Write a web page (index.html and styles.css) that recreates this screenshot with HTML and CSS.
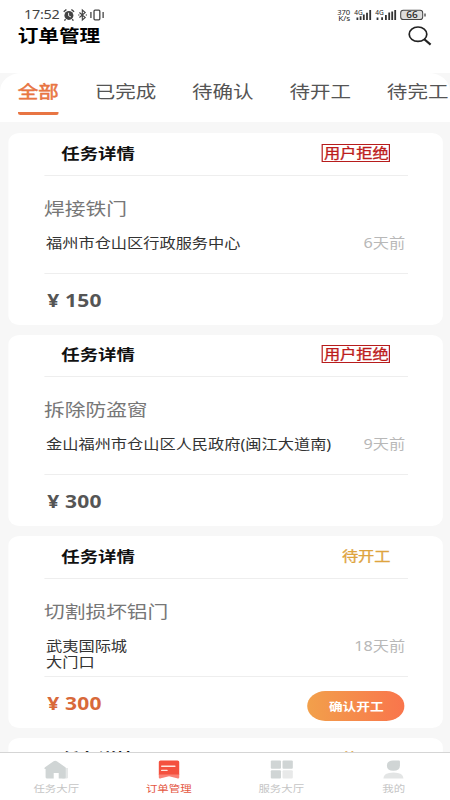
FILE: index.html
```html
<!DOCTYPE html>
<html lang="zh-CN">
<head>
<meta charset="utf-8">
<title>订单管理</title>
<link rel="stylesheet" href="styles.css">
</head>
<body>
<div class="screen">
  <header class="header">
    <div class="status">
      <span class="clock">17:52</span>
      <svg class="status-left" viewBox="0 0 44 14" preserveAspectRatio="none" fill="none" stroke="#444">
        <circle cx="6.5" cy="7.4" r="4.5" fill="#444" stroke="none"/>
        <path d="M1.300 3.800 4 1.500M9 1.500l2.700 2.300M3.200 11.200 2 12.600M9.800 11.200l1.200 1.400" stroke-width="1.400"/>
        <path d="M6.200 4.800v3l2.300 1.100" stroke="#fff" stroke-width=".9"/>
        <path d="m17 4.500 5.800 5-2.900 2.500V2l2.900 2.500-5.800 5" stroke-width="1.100"/>
        <path d="M16 7h.9M23.400 7h.9" stroke-width="1.300"/>
        <rect x="31.600" y="2.200" width="5.800" height="9.600" rx="1" stroke-width="1.300"/>
        <path d="M28.500 4v6M40.700 4v6" stroke-width="1.300"/>
      </svg>
      <svg class="status-right" viewBox="0 0 90 14" preserveAspectRatio="none">
        <g class="tiny">
          <text x="0" y="6.500" textLength="13" lengthAdjust="spacingAndGlyphs">370</text>
          <text x="1" y="13" textLength="12" lengthAdjust="spacingAndGlyphs">K/s</text>
          <text x="17" y="6.500" textLength="8.500" lengthAdjust="spacingAndGlyphs">4G</text>
          <text x="38" y="6.500" textLength="8.500" lengthAdjust="spacingAndGlyphs">4G</text>
        </g>
        <path d="M20.200 12V9.500M23.400 12V8.200M26.600 12V6.600M29.800 12V4.800M33 12V2M40.300 12V9.500M44.900 12V9.200M48.700 12V7M52 12V4.600M58 12V2M55 12V3.500" stroke="#333" stroke-width="1.800"/>
        <rect x="63.500" y="2.300" width="22" height="9.300" rx="2.600" fill="#ddd" stroke="#444" stroke-width="1"/>
        <path d="M87.800 5.400v3.200" stroke="#333" stroke-width="1.200"/>
        <text class="level" x="69" y="10" textLength="11.500" lengthAdjust="spacingAndGlyphs">66</text>
      </svg>
    </div>
    <div class="heading">
      <h1>订单管理</h1>
      <svg class="search" viewBox="0 0 24 20" preserveAspectRatio="none" fill="none" stroke="#222">
        <ellipse cx="10" cy="8.200" rx="8.800" ry="7.200" stroke-width="1.700"/>
        <path d="m16 13 6.600 5.600" stroke-width="2.200"/>
      </svg>
    </div>
  </header>

  <nav class="tabs">
    <span class="tab current">全部</span>
    <span class="tab">已完成</span>
    <span class="tab">待确认</span>
    <span class="tab">待开工</span>
    <span class="tab">待完工</span>
  </nav>

  <main class="orders">
    <article class="card">
      <div class="card-head"><b>任务详情</b><span class="state refused">用户拒绝</span></div>
      <div class="card-body">
        <h2>焊接铁门</h2>
        <div class="place"><span>福州市仓山区行政服务中心</span><time>6天前</time></div>
      </div>
      <div class="card-foot"><strong>¥ 150</strong></div>
    </article>
    <article class="card">
      <div class="card-head"><b>任务详情</b><span class="state refused">用户拒绝</span></div>
      <div class="card-body">
        <h2>拆除防盗窗</h2>
        <div class="place"><span>金山福州市仓山区人民政府(闽江大道南)</span><time>9天前</time></div>
      </div>
      <div class="card-foot"><strong>¥ 300</strong></div>
    </article>
    <article class="card">
      <div class="card-head"><b>任务详情</b><span class="state waiting">待开工</span></div>
      <div class="card-body">
        <h2>切割损坏铝门</h2>
        <div class="place"><span>武夷国际城<br>大门口</span><time>18天前</time></div>
      </div>
      <div class="card-foot"><strong class="active">¥ 300</strong><button>确认开工</button></div>
    </article>
    <article class="card">
      <div class="card-head"><b>任务详情</b><span class="state waiting">待开工</span></div>
    </article>
  </main>

  <footer class="bottom">
    <div class="item">
      <svg viewBox="0 0 26 20" preserveAspectRatio="none">
        <path d="M19 8h5.800v9.200q0 1.300-1.500 1.300H19z" fill="#e6e8e8"/>
        <path d="M1.500 7.500 10.400 1.200q1.600-1.100 3.200 0L22.500 7.500v9.700q0 1.300-1.500 1.300h-5.500V13h-5v5.500H3.900q-1.500 0-1.500-1.300V9H1.200z" fill="#d0d5d5"/>
      </svg>
      <span>任务大厅</span>
    </div>
    <div class="item selected">
      <svg viewBox="0 0 26 20" preserveAspectRatio="none">
        <path d="M4.500.5h17q1.700 0 1.700 1.500v13H2.800V2q0-1.500 1.700-1.500z" fill="#f4513f"/>
        <path d="M2.800 14.500h20.400v3q0 1.500-2.200.8L13 16.200l-8 2.100q-2.200.7-2.200-.8z" fill="#fa8175"/>
        <path d="M5.700 6.200h13.200M5.700 10.400h5.300" stroke="#ffe7df" stroke-width="1.400" stroke-linecap="round"/>
      </svg>
      <span>订单管理</span>
    </div>
    <div class="item">
      <svg viewBox="0 0 26 20" preserveAspectRatio="none" fill="#d0d5d5">
        <rect x="2" y=".5" width="10.200" height="8.200" rx="1"/>
        <rect x="13.700" y=".5" width="10.300" height="8.200" rx="1"/>
        <rect x="2" y="10.200" width="10.200" height="8.300" rx="1"/>
        <rect x="13.700" y="10.200" width="10.300" height="8.300" rx="1" fill="#e8e9e9"/>
      </svg>
      <span>服务大厅</span>
    </div>
    <div class="item">
      <svg viewBox="0 0 26 20" preserveAspectRatio="none">
        <path d="M3 18.500q0-6 10-6t10 6z" fill="#e3e5e5"/>
        <path d="M12.600.5h6q.9 0 .9.900v4.400q0 5-6.500 5t-6.500-5q0-5.300 6.100-5.300z" fill="#d0d5d5"/>
      </svg>
      <span>我的</span>
    </div>
  </footer>
</div>
</body>
</html>
```
FILE: styles.css
```css
* { box-sizing: border-box; }

body {
  margin: 0;
  overflow: hidden;
  background: #fff;
  font-family: "Noto Sans", "Noto Sans CJK SC", sans-serif;
}

/* A 375px wide layout stretched across the 450px window */
.screen {
  display: flex;
  flex-direction: column;
  width: 375px;
  height: 800px;
  overflow: hidden;
  background: #f7f7f7;
  transform: scaleX(1.2);
  transform-origin: 0 0;
}

h1, h2 { margin: 0; }

.header { flex: none; height: 73px; background: #fff; }

.status {
  display: flex;
  align-items: center;
  height: 22px;
  padding: 8px 19.500px 0 20px;
}
.clock {
  width: 32px;
  color: #444;
  font-size: 12px;
  line-height: 14px;
  letter-spacing: -0.200px;
}
.status-left { width: 36.700px; height: 14px; }
.status-right { width: 75px; height: 14px; margin-left: auto; overflow: visible; }
.tiny { font-size: 6.800px; fill: #222; }
.level { font-size: 8.500px; font-weight: 500; fill: #222; }

.heading {
  display: flex;
  justify-content: space-between;
  align-items: center;
  height: 28px;
  padding: 0 15.500px 0 14.700px;
}
.heading h1 {
  font-size: 17.200px;
  line-height: 28px;
  color: #000;
}
.search { width: 20px; height: 20px; }

.tabs {
  display: flex;
  flex: none;
  height: 49px;
  background: #fff;
  border-radius: 18px 18px 0 0;
  overflow: hidden;
}
.tab {
  flex: none;
  margin: 0 15.100px 0 14.800px;
  height: 42px;
  font-size: 17.100px;
  line-height: 38px;
  color: #555;
}
.tab.current {
  color: #e87543;
  -webkit-text-stroke: 0.500px #e87543;
  border-bottom: 3px solid #e87543;
  border-radius: 2px;
}

.orders {
  display: flex;
  flex: 1;
  flex-direction: column;
  gap: 9.800px;
  min-height: 0;
  padding: 11px 6px 0 7.300px;
  overflow: hidden;
}
.card {
  flex: none;
  height: 191.800px;
  padding: 0 29.300px;
  background: #fff;
  border-radius: 9px;
}
.card-head {
  display: flex;
  justify-content: space-between;
  align-items: center;
  height: 42.500px;
  padding: 0 14.300px 2px 14.500px;
  border-bottom: 1px solid #eee;
  font-size: 15.300px;
  line-height: 20px;
  color: #111;
}
.state { font-size: 13.500px; }
.refused {
  padding: 0 0.500px;
  border: 1px solid #b71c1c;
  line-height: 16px;
  color: #bd1c1c;
  -webkit-text-stroke: 0.300px #bd1c1c;
}
.waiting { color: #dea43e; -webkit-text-stroke: 0.300px #dea43e; }

.card-body { height: 98px; border-bottom: 1px solid #eee; }
.card-body h2 {
  padding-top: 20px;
  font-size: 17.300px;
  font-weight: 400;
  line-height: 25px;
  color: #777;
}
.place {
  display: flex;
  justify-content: space-between;
  padding: 14px 2px 0 1.800px;
  font-size: 13.500px;
  line-height: 16px;
  color: #333;
}
.place time { color: #b8b8b8; }

.card-foot {
  display: flex;
  justify-content: space-between;
  align-items: center;
  height: 50px;
  padding: 5px 2.300px 0 2.800px;
}
.card-foot strong {
  margin-top: -3px;
  font-size: 17.500px;
  line-height: 24px;
  letter-spacing: 0.150px;
  color: #555;
}
.card-foot .active { color: #d8693a; }
.card-foot button {
  width: 81px;
  height: 30px;
  margin-top: 3px;
  padding: 0;
  border: 0;
  border-radius: 15px;
  background: linear-gradient(90deg, #f2a04b, #f9754c);
  color: #fff;
  font: 700 11.400px "Noto Sans CJK SC", sans-serif;
}

.bottom {
  display: flex;
  flex: none;
  height: 48px;
  background: #fff;
  border-top: 1px solid #d5d5d5;
}
.item {
  display: flex;
  flex: 1;
  flex-direction: column;
  align-items: center;
  padding-top: 7px;
  font-size: 9.500px;
  line-height: 14px;
  color: #c5c5c5;
}
.item svg { width: 21.700px; height: 20px; margin-bottom: 2px; }
.item.selected { color: #e4563f; }
```
